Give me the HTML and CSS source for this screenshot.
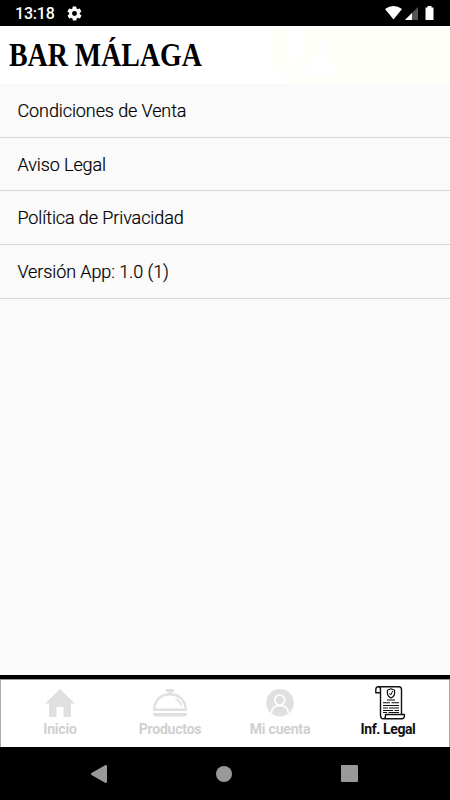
FILE: index.html
```html
<!DOCTYPE html>
<html lang="es">

<head>
    <meta charset="UTF-8">
    <meta name="viewport" content="width=device-width, initial-scale=1.0">
    <title>Bar Málaga</title>

    <link rel="stylesheet" href="styles.css">
</head>

<body>
    <div class="status-bar">
        <span class="clock">13:18</span>
        <svg class="gear" width="17" height="17" viewBox="0 0 24 24">
            <path fill="#fff" d="M19.4 13c0-.3.1-.6.1-1s0-.7-.1-1l2.1-1.600c.2-.1.2-.4.1-.6l-2-3.500c-.1-.2-.4-.3-.6-.2l-2.500 1c-.5-.4-1.100-.7-1.700-1l-.4-2.600c0-.3-.2-.5-.5-.5h-4c-.2 0-.4.2-.5.400l-.4 2.700c-.6.2-1.100.6-1.700 1l-2.500-1c-.2-.1-.5 0-.6.200l-2 3.500c-.1.200-.1.500.1.600L4.600 11c0 .3-.1.700-.1 1s0 .7.100 1l-2.100 1.600c-.2.200-.2.400-.1.600l2 3.500c.1.200.3.300.6.200l2.500-1c.5.400 1.100.700 1.700 1l.4 2.700c0 .200.200.400.500.400h4c.200 0 .500-.2.500-.400l.4-2.700c.6-.2 1.200-.6 1.700-1l2.500 1c.200.100.500 0 .600-.200l2-3.500c.1-.2.100-.5-.1-.600zM12 15.500a3.500 3.500 0 1 1 0-7 3.500 3.500 0 0 1 0 7z"/>
        </svg>
        <svg class="signals" width="50" height="15" viewBox="0 0 50 15">
            <path fill="#fff" d="M0 3Q8.500-3 17 3L8.500 13.500z"/>
            <path fill="#555" d="M33 1v13H20z"/>
            <path fill="#fff" d="M27 7v7h-7z"/>
            <path fill="#fff" d="M40.500 1.500h2V0h4v1.500h2V14h-8z"/>
        </svg>
    </div>

    <header>
        <h1>BAR MÁLAGA</h1>
        <svg class="watermark" width="181" height="57" viewBox="0 0 181 57">
            <path fill="#fffffa" d="M1 0H20V18Q20 39 26 51Q34 39 33 0H181V57H18L12 38L8 43L1 43z"/>
            <path fill="#fff" d="M50 14h6v18h5v4l8 6v7H37v-5l5-13 8-3z"/>
        </svg>
    </header>

    <main>
        <ul class="legal-list">
            <li>Condiciones de Venta</li>
            <li>Aviso Legal</li>
            <li>Política de Privacidad</li>
            <li>Versión App: 1.0 (1)</li>
        </ul>
    </main>

    <nav class="tabs">
        <div class="tab">
            <svg width="30" height="34" viewBox="0 0 30 34">
                <path fill="#e0e0e0" d="M15 3L30 17.500H26V31H18.500V21H11.500V31H4V17.500H0z"/>
            </svg>
            <span>Inicio</span>
        </div>
        <div class="tab">
            <svg width="34" height="34" viewBox="0 0 34 34">
                <path fill="#e0e0e0" d="M13 3h8v3h-2.500v2h-3V6H13zM0 27h34v1q0 2.500-3 2.500H3Q0 30.500 0 28z"/>
                <path fill="none" stroke="#e0e0e0" stroke-width="2.400" d="M1.200 23.800C1.500 14 8 8.200 17 8.200S32.500 14 32.800 23.800z"/>
                <path fill="none" stroke="#e0e0e0" stroke-width="1.600" d="M22.500 13Q27 15 28.500 19.500"/>
            </svg>
            <span>Productos</span>
        </div>
        <div class="tab">
            <svg width="28" height="34" viewBox="0 0 28 34">
                <circle cx="14" cy="16.800" r="13.800" fill="#e0e0e0"/>
                <g fill="none" stroke="#fff" stroke-width="1.700">
                    <circle cx="13.800" cy="14" r="5"/>
                    <path d="M5.200 27Q6 19.500 13.800 19.500T22.500 27"/>
                </g>
            </svg>
            <span>Mi cuenta</span>
        </div>
        <div class="tab active">
            <svg width="31" height="34" viewBox="0 0 31 34">
                <g fill="none" stroke="#111" stroke-width="1.400" stroke-linejoin="round">
                    <path d="M3.500.7H24Q26.500.7 26.500 3.500V28.500M3.500.7Q.8.7.8 3.500V6.700H5.500V29Q5.500 32.800 8.500 32.800H27Q29.500 32.800 29.500 28.500H10.500V30Q10.500 32.800 8.500 32.800M3.500.7Q5.500.7 5.500 3.500V7"/>
                    <path stroke-width="1.200" d="M16 2.800L19.600 4.200V7Q19.600 10.200 16 12Q12.400 10.200 12.400 7V4.200z"/>
                    <path stroke-width="1" d="M14.500 7.300l1.200 1.700 2-4"/>
                    <path stroke-width="1.100" d="M12 14H20M8 16.800H15M16.500 16.800H24M8 19.500H24M8 22H13M14 22H24M8 24.500H18M19.500 24.500H24M8 26.500H12M13.500 26.500H24"/>
                </g>
            </svg>
            <span>Inf. Legal</span>
        </div>
    </nav>

    <div class="system-nav">
        <svg width="16" height="18" viewBox="0 0 16 18">
            <path fill="#999" d="M14.500 0Q16 0 16 1V17Q16 18 14.500 18L.5 10Q-.5 9 .5 8z"/>
        </svg>
        <div class="home"></div>
        <div class="recent"></div>
    </div>
</body>

</html>
```
FILE: styles.css
```css
* {
    box-sizing: border-box;
}

body {
    margin: 0;
    height: 800px;
    display: flex;
    flex-direction: column;
    overflow: hidden;
    background-color: #fafafa;
    font-family: Roboto, "Liberation Sans", sans-serif;
    color: #111;
}

.status-bar {
    display: flex;
    align-items: center;
    height: 26px;
    padding: 1px 15px 0 15px;
    background-color: black;
}

.clock {
    width: 51px;
    color: white;
    font-size: 16px;
    font-weight: 500;
    letter-spacing: -.2px;
    line-height: 26px;
}

.signals {
    margin-left: auto;
}

header {
    display: flex;
    align-items: center;
    justify-content: space-between;
    height: 58px;
    padding-left: 9px;
    background-color: white;
}

h1 {
    width: 193px;
    margin: 0;
    color: black;
    font-family: "Liberation Serif", serif;
    font-size: 33px;
    line-height: 58px;
    white-space: nowrap;
    transform: scaleX(.845);
    transform-origin: left;
}

main {
    flex: 1;
}

.legal-list {
    margin: 0;
    padding: 0;
    list-style: none;
}

.legal-list li {
    height: 53.7px;
    padding-left: 17.5px;
    border-bottom: 1px solid #d6d6d6;
    color: black;
    font-size: 18px;
    font-weight: 300;
    letter-spacing: -.1px;
    line-height: 53px;
    -webkit-text-stroke: .2px black;
}

.tabs {
    display: flex;
    height: 72px;
    padding: 0 5px;
    border-top: 4px solid black;
    background-color: white;
    box-shadow: inset 0 1px #999, inset 1px 0 #aaa, inset -1px 0 #aaa;
}

.tab {
    flex: 1;
    display: flex;
    flex-direction: column;
    align-items: center;
    padding-top: 7px;
    color: #d0d0d0;
    font-size: 14px;
    font-weight: 700;
    letter-spacing: -.2px;
    line-height: 18px;
}

.tab.active {
    color: #111;
}

.tab.active span {
    margin-right: 4px;
    letter-spacing: -.4px;
}

.system-nav {
    display: flex;
    align-items: center;
    justify-content: space-between;
    height: 53px;
    padding: 0 92px 0 91px;
    background-color: black;
}

.home {
    width: 16px;
    height: 16px;
    border-radius: 50%;
    background-color: #999;
}

.recent {
    width: 17px;
    height: 17px;
    border-radius: 1px;
    background-color: #999;
}
```
